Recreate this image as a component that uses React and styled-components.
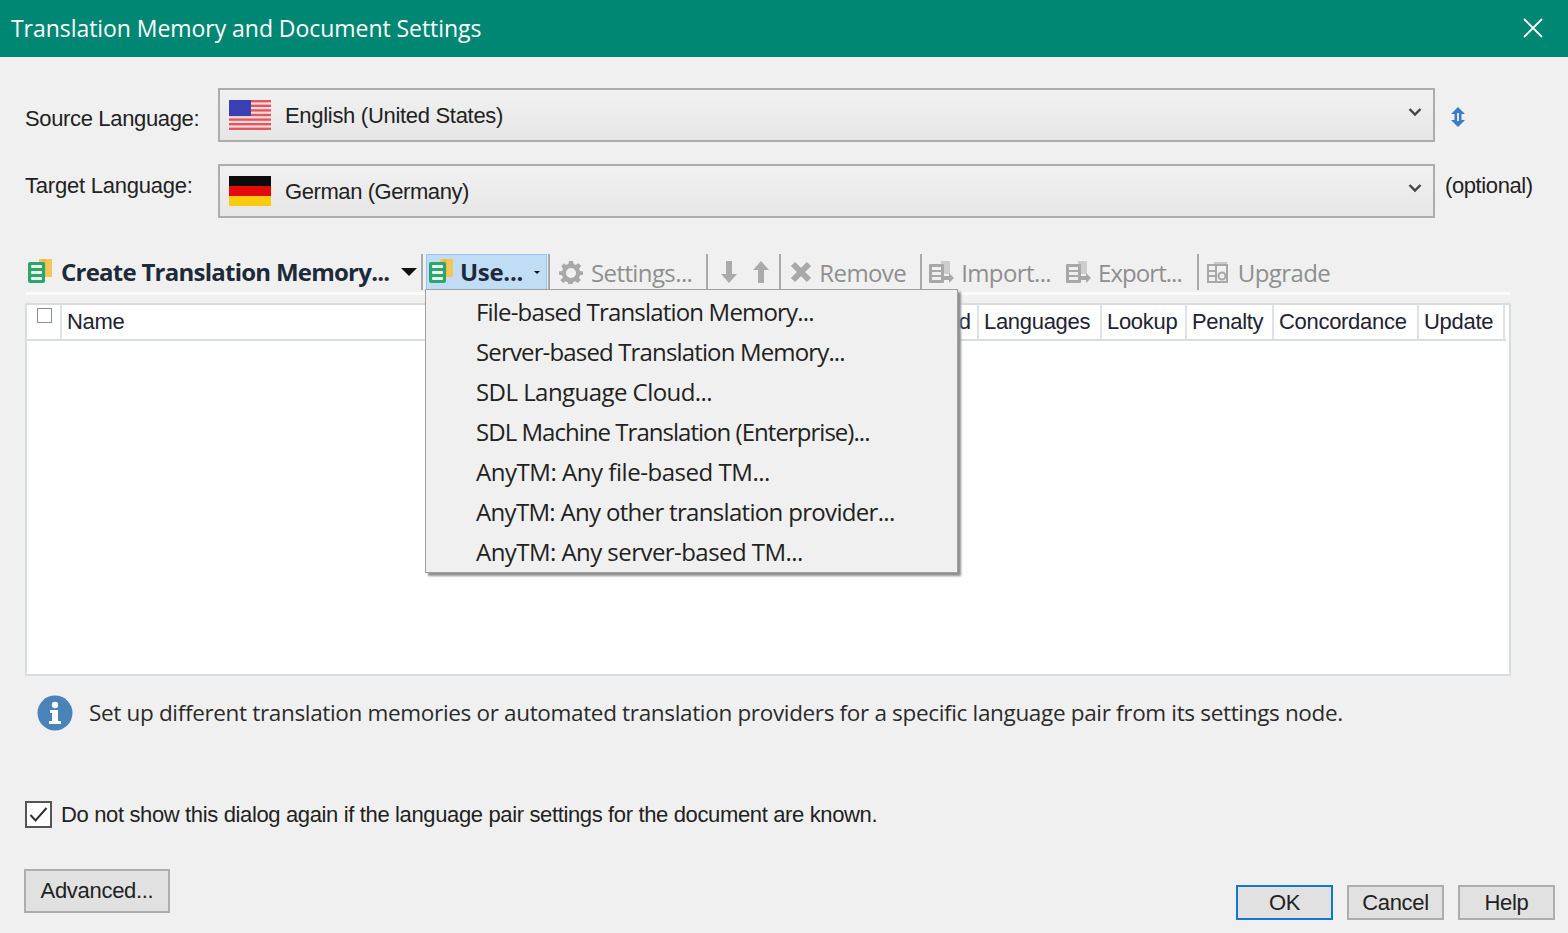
import React from "react";
import styled, { createGlobalStyle } from "styled-components";

const Global = createGlobalStyle`
  html, body { margin: 0; padding: 0; background: #f0f0f0; }
  body { width: 1568px; height: 933px; overflow: hidden; font-family: "Liberation Sans", Arial, sans-serif; color: #222; }
`;
const UI = `"Open Sans", "Noto Sans", sans-serif`;

const Dialog = styled.div`
  width: 1568px; height: 933px; display: flex; flex-direction: column; background: #f0f0f0;
`;
const TitleBar = styled.header`
  height: 57px; flex: none; background: #008774; display: flex; align-items: center; justify-content: space-between;
  padding: 0 23px 2px 11px; box-sizing: border-box; color: #fff; font: 400 23px ${UI}; letter-spacing: -0.05px;
`;
const Body = styled.main`
  flex: 1; display: flex; flex-direction: column; min-height: 0;
`;
const LangGrid = styled.section`
  display: grid; grid-template-columns: 193px 1217px 1fr; column-gap: 0; row-gap: 22px; padding: 31px 0 0 25px; align-items: center;
`;
const FieldLabel = styled.label`
  font-size: 22px; letter-spacing: ${p => p.$ls ?? -0.35}px; position: relative; top: ${p => p.$up || 0}px; white-space: nowrap;
`;
const Combo = styled.div`
  height: 54px; box-sizing: border-box; border: 2px solid #adadad; background: linear-gradient(#f1f1f1, #e6e6e6);
  display: flex; align-items: center; padding: 0 11px 0 9px; font-size: 22px;
`;
const ComboText = styled.span` margin-left: 14px; flex: 1; position: relative; top: 1px; letter-spacing: ${p => p.$ls ?? -0.3}px; `;
const Aside = styled.div`
  padding-left: ${p => p.$pl || 10}px; font-size: 22px; letter-spacing: -0.4px; position: relative; top: ${p => p.$up || 0}px;
`;
const Toolbar = styled.div`
  margin: 34px 58px 0 26px; height: 40px; display: flex; align-items: center; border-bottom: 3px solid #fbfbfb; position: relative;
  font: 400 24px ${UI}; letter-spacing: -0.6px; color: #8f8f8f;
`;
const CreateBtn = styled.div`
  display: flex; align-items: center; width: 395px; padding-left: 2px; box-sizing: border-box; font-weight: 700; color: #1d2a3a; letter-spacing: -0.75px; white-space: nowrap;
`;
const Sep = styled.span`
  width: 2px; height: 36px; background: #a9a9a9; flex: none; margin-left: ${p => p.$ml || 0}px;
`;
const UseBtn = styled.div`
  width: 121px; height: 37px; margin-left: 3px; box-sizing: border-box; display: flex; align-items: center;
  background: #c1ddf5; border: 1px solid #99c5ec; font-weight: 700; color: #1d2a3a; padding-left: 2px; letter-spacing: -0.3px;
`;
const Tool = styled.div`
  display: flex; align-items: center; gap: ${p => p.$gap || 9}px; margin-left: ${p => p.$ml || 0}px; white-space: nowrap;
  letter-spacing: ${p => p.$ls ?? -0.6}px;
`;
const ButtonLabel = styled.span` margin-left: ${p => p.$ml}px; position: relative; top: -1px; `;
const Caret = styled.span`
  width: 0; height: 0; border-left: ${p => p.$s}px solid transparent; border-right: ${p => p.$s}px solid transparent;
  border-top: ${p => p.$s}px solid #111; margin-left: ${p => p.$ml}px;
`;
const Menu = styled.ul`
  position: absolute; left: 399px; top: 37px; width: 533px; height: 284px; box-sizing: border-box; z-index: 5; margin: 0; padding: 3px 0 0; list-style: none;
  background: #f0f0f0; border: 1px solid #a0a0a0; box-shadow: 3px 3px 2px #8f8f8f;
  font: 400 24px ${UI}; color: #222;
`;
const MenuItem = styled.li`
  height: 40px; line-height: 38px; padding-left: 50px; white-space: nowrap; letter-spacing: ${p => p.$ls}px;
`;
const Table = styled.section`
  margin: 8px 0 0 25px; width: 1486px; height: 373px; box-sizing: border-box; background: #fff; border: 2px solid #d9dde0;
`;
const HeaderRow = styled.div`
  width: 1479px; height: 34px; display: grid; grid-template-columns: 35px 825px 92px 123px 85px 87px 145px 86px; border-bottom: 2px solid #d9dde0; box-sizing: content-box;
`;
const HeadCell = styled.div`
  font-size: 22px; letter-spacing: -0.3px; padding-left: 5px; border-right: 2px solid #dfe3e6; line-height: 34px; overflow: hidden; white-space: nowrap; box-sizing: border-box; color: #223;
`;
const CheckCell = styled(HeadCell)` padding: 3px 0 0 10px; line-height: 0; `;
const TinyCheck = styled.span` display: block; width: 13px; height: 13px; border: 1px solid #8e8e8e; background: #fff; `;
const InfoRow = styled.div`
  display: flex; align-items: center; gap: 16px; margin: 19px 0 0 37px; font: 400 22.5px ${UI}; letter-spacing: -0.335px; height: 36px; color: #2b2b2b;
`;
const InfoText = styled.span` position: relative; top: -1px; `;
const CheckRow = styled.label`
  display: flex; align-items: center; gap: 9px; margin: 70px 0 0 25px; font-size: 22px; letter-spacing: -0.36px; height: 27px;
`;
const CheckBox = styled.span`
  width: 27px; height: 27px; box-sizing: border-box; border: 2px solid #555; background: #fff; display: flex; align-items: center; justify-content: center;
`;
const Footer = styled.footer`
  display: flex; justify-content: space-between; align-items: flex-start; margin: 41px 13px 0 24px;
`;
const Btn = styled.button`
  box-sizing: border-box; width: ${p => p.$w || 97}px; height: ${p => p.$h || 35}px; background: #e1e1e1; border: 2px solid ${p => p.$def ? "#0f78cf" : "#adadad"};
  font: 400 22px "Liberation Sans", Arial, sans-serif; letter-spacing: -0.3px; color: #222; padding: 0;
`;
const BtnGroup = styled.div` display: flex; gap: 14px; margin-top: 16px; `;

const Store = ({ mt = 0 }) => (
  <svg width="26" height="24" viewBox="0 0 26 24" style={{ flex: "none", marginTop: mt }}>
    <rect x="11" y="0" width="13" height="18" fill="#f3c65a" />
    <rect x="14" y="0" width="4" height="18" fill="#e9b94a" />
    <rect x="0" y="3" width="17" height="21" rx="2" fill="#2fa56e" />
    <rect x="3" y="6" width="11" height="3" rx="1" fill="#e8f7ef" />
    <rect x="3" y="12" width="11" height="3" rx="1" fill="#e8f7ef" />
    <rect x="3" y="18" width="11" height="3" rx="1" fill="#e8f7ef" />
  </svg>
);
const Gear = () => (
  <svg width="24" height="24" viewBox="0 0 24 24"><path fill="#a8a8a8" fillRule="evenodd" d="M10 1h4l.6 3 2.200 1 2.600-1.700 2.800 2.800L20 8.700l1 2.200 3 .6v3.200l-3 .6-1 2.200 1.700 2.600-2.800 2.800-2.600-1.700-2.200 1-.6 2.800h-4l-.6-2.800-2.200-1-2.600 1.700-2.800-2.800L4 17.500l-1-2.200-3-.6v-3.200l3-.6 1-2.200-1.700-2.600 2.800-2.800L6.700 5l2.700-1zM12 8a5 5 0 1 0 0 10 5 5 0 0 0 0-10z" /></svg>
);
const Arrow = ({ up }) => (
  <svg width="18" height="24" viewBox="0 0 18 24" style={{ transform: up ? "none" : "rotate(180deg)" }}><path fill="#ababab" d="M9 1l8 9h-5v13H6V10H1z" /></svg>
);
const XMark = () => (
  <svg width="22" height="22" viewBox="0 0 22 22"><path stroke="#a8a8a8" strokeWidth="6" d="M3 3l16 16M19 3L3 19" /></svg>
);
const Transfer = () => (
  <svg width="26" height="24" viewBox="0 0 26 24">
    <rect x="13" y="1" width="9" height="13" fill="#cdcdcd" />
    <rect x="1" y="4" width="15" height="19" rx="1" fill="#a8a8a8" />
    <rect x="4" y="7" width="9" height="3" fill="#efefef" /><rect x="4" y="12" width="9" height="3" fill="#efefef" /><rect x="4" y="17" width="9" height="3" fill="#efefef" />
    <path fill="#a8a8a8" d="M15 16h6v-3l5 5-5 5v-3h-6z" />
  </svg>
);
const UpgradeIcon = () => (
  <svg width="22" height="24" viewBox="0 0 22 24">
    <rect x="7" y="2" width="13" height="4" fill="#c8c8c8" />
    <rect x="1" y="5" width="19" height="17" fill="none" stroke="#a8a8a8" strokeWidth="2" />
    <path stroke="#a8a8a8" strokeWidth="2" d="M1 11h9M1 16h9M9 5v17" />
    <circle cx="15" cy="16" r="3.500" fill="none" stroke="#a8a8a8" strokeWidth="2" />
  </svg>
);
const UsFlag = () => (
  <svg width="42" height="30" viewBox="0 0 42 30" style={{ flex: "none" }}>
    <rect width="42" height="30" fill="#f6dede" />
    {[0, 1, 2, 3, 4, 5, 6].map(i => <rect key={i} y={i * 4.6} width="42" height="2.400" fill="#e4565f" />)}
    <rect width="22" height="16" fill="#3a3fb4" />
  </svg>
);
const DeFlag = () => (
  <svg width="42" height="30" viewBox="0 0 42 30" style={{ flex: "none" }}>
    <rect width="42" height="10" fill="#0b0b0b" /><rect y="10" width="42" height="10" fill="#e20a0a" /><rect y="20" width="42" height="10" fill="#fdcb0d" />
  </svg>
);
const Chevron = () => (
  <svg width="14" height="10" viewBox="0 0 14 10" style={{ marginTop: -6 }}><path fill="none" stroke="#444" strokeWidth="2.400" d="M1.500 2l5.500 5.500L12.500 2" /></svg>
);

const MENU = [
  ["File-based Translation Memory...", -0.82],
  ["Server-based Translation Memory...", -0.85],
  ["SDL Language Cloud...", -0.55],
  ["SDL Machine Translation (Enterprise)...", -0.97],
  ["AnyTM: Any file-based TM...", -0.46],
  ["AnyTM: Any other translation provider...", -0.68],
  ["AnyTM: Any server-based TM...", -0.55],
];
const COLS = ["Name", "Enabled", "Languages", "Lookup", "Penalty", "Concordance", "Update"];

export default function App() {
  return (
    <Dialog>
      <Global />
      <TitleBar>
        <span>Translation Memory and Document Settings</span>
        <svg width="24" height="24" viewBox="0 0 24 24"><path stroke="#fff" strokeWidth="1.800" d="M3 3l18 18M21 3L3 21" /></svg>
      </TitleBar>
      <Body>
        <LangGrid>
          <FieldLabel $up={4}>Source Language:</FieldLabel>
          <Combo><UsFlag /><ComboText>English (United States)</ComboText><Chevron /></Combo>
          <Aside $pl={16}>
            <svg width="14" height="20" viewBox="0 0 14 20" style={{ display: "block", marginTop: 4 }}><path fill="#3c7bc8" d="M7 0l7 7h-3.500v6H14l-7 7-7-7h3.500V7H0z" /><rect x="6" y="6" width="2" height="8" fill="#dbe7f5" /></svg>
          </Aside>
          <FieldLabel $up={-5} $ls={-0.22}>Target Language:</FieldLabel>
          <Combo><DeFlag /><ComboText $ls={-0.42}>German (Germany)</ComboText><Chevron /></Combo>
          <Aside $up={-5}>(optional)</Aside>
        </LangGrid>
        <Toolbar>
          <CreateBtn><Store mt={-3} /><ButtonLabel $ml={7}>Create Translation Memory...</ButtonLabel><Caret $s={8} $ml={12} /></CreateBtn>
          <Sep />
          <UseBtn><Store mt={-3} /><ButtonLabel $ml={5}>Use...</ButtonLabel><Caret $s={3} $ml={11} /></UseBtn>
          <Sep $ml={1} />
          <Tool $ml={9} $gap={8}><Gear /><span>Settings...</span></Tool>
          <Sep $ml={14} />
          <Tool $ml={12}><Arrow /></Tool>
          <Tool $ml={14}><Arrow up /></Tool>
          <Sep $ml={9} />
          <Tool $ml={9} $gap={7}><XMark /><span>Remove</span></Tool>
          <Sep $ml={14} />
          <Tool $ml={6} $gap={7}><Transfer /><span>Import...</span></Tool>
          <Tool $ml={14} $gap={7} $ls={-0.95}><Transfer /><span>Export...</span></Tool>
          <Sep $ml={15} />
          <Tool $ml={8} $gap={9}><UpgradeIcon /><span>Upgrade</span></Tool>
          <Menu>{MENU.map(([m, ls]) => <MenuItem key={m} $ls={ls}>{m}</MenuItem>)}</Menu>
        </Toolbar>
        <Table>
          <HeaderRow>
            <CheckCell><TinyCheck /></CheckCell>
            {COLS.map(c => <HeadCell key={c}>{c}</HeadCell>)}
          </HeaderRow>
        </Table>
        <InfoRow>
          <svg width="36" height="36" viewBox="0 0 36 36" style={{ flex: "none" }}><circle cx="18" cy="18" r="17.500" fill="#4a82ba" /><circle cx="18" cy="10" r="3.200" fill="#fff" /><path fill="#fff" d="M13 15h8v11h3v3H12v-3h3v-8h-2z" /></svg>
          <InfoText>Set up different translation memories or automated translation providers for a specific language pair from its settings node.</InfoText>
        </InfoRow>
        <CheckRow>
          <CheckBox><svg width="19" height="17" viewBox="0 0 19 17"><path fill="none" stroke="#333" strokeWidth="2" d="M1.500 9l5 5.500L17.500 2" /></svg></CheckBox>
          Do not show this dialog again if the language pair settings for the document are known.
        </CheckRow>
        <Footer>
          <Btn $w={146} $h={44}>Advanced...</Btn>
          <BtnGroup>
            <Btn $def>OK</Btn><Btn>Cancel</Btn><Btn>Help</Btn>
          </BtnGroup>
        </Footer>
      </Body>
    </Dialog>
  );
}
